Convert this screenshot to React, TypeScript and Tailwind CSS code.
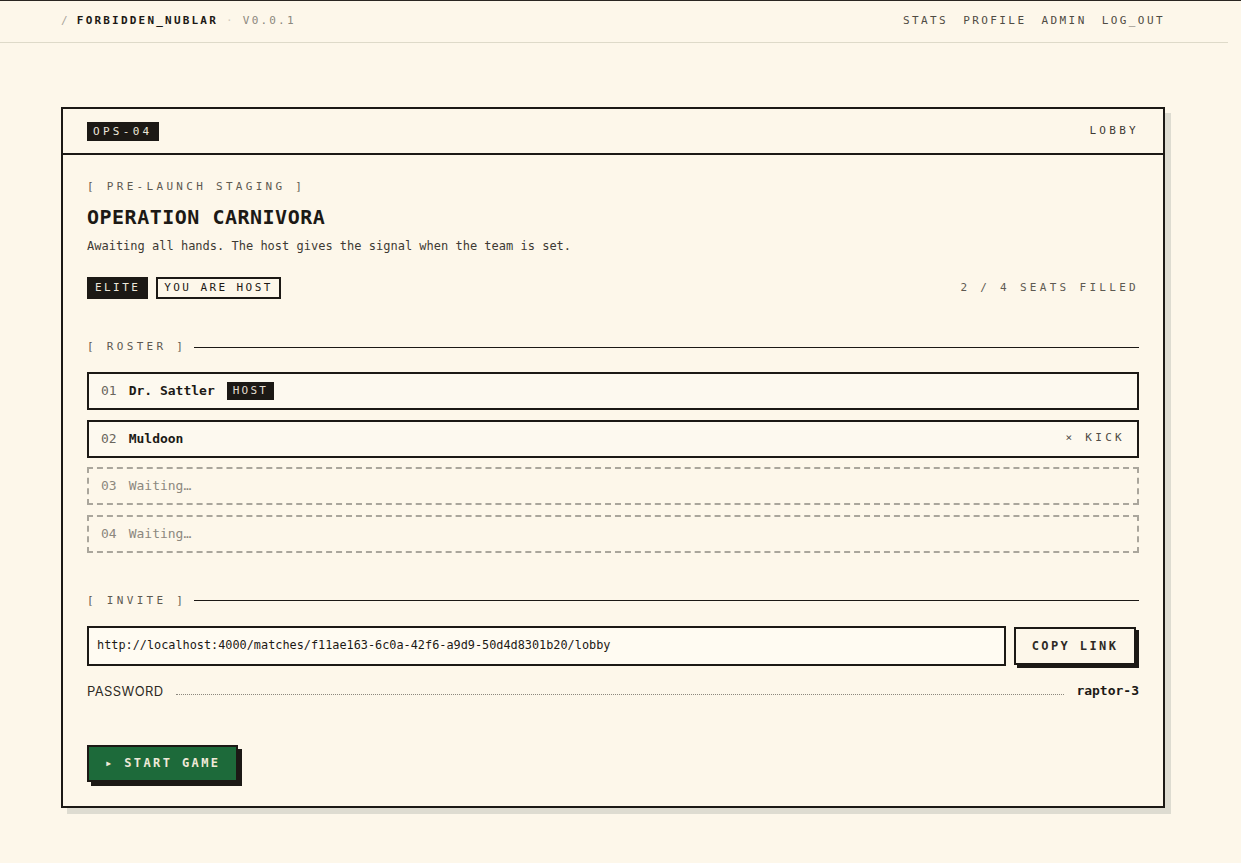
const mono = "font-['DejaVu_Sans_Mono',monospace]";

const SectionHead = ({ label }: { label: string }) => (
  <div className="flex items-center gap-2">
    <span className="text-[11px] leading-4 tracking-[0.3em] text-[#5e5a52]">
      [ {label} ]
    </span>
    <div className="h-px flex-1 bg-[#1c1915]" />
  </div>
);

type Seat = { no: string; name?: string; host?: boolean; kick?: boolean };

const seats: Seat[] = [
  { no: "01", name: "Dr. Sattler", host: true },
  { no: "02", name: "Muldoon", kick: true },
  { no: "03" },
  { no: "04" },
];

const SeatRow = ({ seat }: { seat: Seat }) => {
  if (!seat.name) {
    return (
      <div className="flex h-[38px] items-center gap-3 border-2 border-dashed border-[#aaa69c] px-3 text-[13px] text-[#8c887e]">
        <span>{seat.no}</span>
        <span>Waiting…</span>
      </div>
    );
  }
  return (
    <div className="flex h-[38px] items-center gap-3 border-2 border-[#1c1915] bg-[#fdf9ef] px-3 text-[13px]">
      <span className="text-[#6a665e]">{seat.no}</span>
      <span className="font-bold text-[#1c1915]">{seat.name}</span>
      {seat.host && (
        <span className="bg-[#1c1915] px-1.5 py-[2px] text-[11px] leading-[14px] tracking-[0.2em] text-[#e4dfd2]">
          HOST
        </span>
      )}
      {seat.kick && (
        <span className="ml-auto text-[11px] tracking-[0.3em] text-[#4f4b44]">
          × KICK
        </span>
      )}
    </div>
  );
};

const App = () => {
  return (
    <div className={`min-h-[863px] w-full bg-[#fdf7ea] ${mono} text-[#1c1915]`}>
      <div className="h-px w-full bg-[#2a2622]" />
      <header className="w-[1228px] border-b border-[#dedac9]">
        <div className="ml-[61px] flex h-[41px] w-[1104px] items-center justify-between">
          <div className="flex items-center text-[11px] tracking-[0.2em]">
            <span className="mr-[7px] text-[#aaa69c]">/</span>
            <span className="font-bold text-[#1c1915]">FORBIDDEN_NUBLAR</span>
            <span className="mx-2 text-[#d0ccc0]">·</span>
            <span className="text-[#8c887e]">V0.0.1</span>
          </div>
          <nav className="flex items-center gap-[15px] text-[11px] tracking-[0.22em] text-[#4f4b44]">
            <span>STATS</span>
            <span>PROFILE</span>
            <span>ADMIN</span>
            <span>LOG_OUT</span>
          </nav>
        </div>
      </header>

      <div className="w-[1228px] pt-[64px] pb-[48px]">
        <div className="ml-[61px] w-[1104px] border-2 border-[#1c1915] bg-[#fdf7ea] shadow-[6px_6px_0_#dedcd1]">
          <div className="flex h-[46px] items-center justify-between border-b-2 border-[#1c1915] px-6">
            <span className="bg-[#1c1915] px-1.5 py-[3px] text-[11px] leading-[13px] tracking-[0.3em] text-[#ece7da]">
              OPS-04
            </span>
            <span className="text-[11px] tracking-[0.3em] text-[#3d3a34]">LOBBY</span>
          </div>

          <div className="px-6 pt-6 pb-6">
            <div className="text-[11px] leading-4 tracking-[0.3em] text-[#5e5a52]">
              [ PRE-LAUNCH STAGING ]
            </div>
            <h1 className="mt-2 text-[20px] leading-7 font-bold tracking-[0.5px] text-[#1c1915]">
              OPERATION CARNIVORA
            </h1>
            <p className="mt-[7px] text-[12px] leading-4 text-[#3d3a34]">
              Awaiting all hands. The host gives the signal when the team is set.
            </p>

            <div className="mt-[23px] flex items-center justify-between">
              <div className="flex items-center gap-2">
                <span className="border-2 border-[#1c1915] bg-[#1c1915] px-1.5 py-[2px] text-[11px] leading-[14px] tracking-[0.22em] text-[#ece7da]">
                  ELITE
                </span>
                <span className="border-2 border-[#1c1915] px-1.5 py-[2px] text-[11px] leading-[14px] tracking-[0.22em] text-[#1c1915]">
                  YOU ARE HOST
                </span>
              </div>
              <span className="text-[11px] tracking-[0.3em] text-[#5e5a52]">
                2 / 4 SEATS FILLED
              </span>
            </div>

            <div className="mt-10">
              <SectionHead label="ROSTER" />
            </div>
            <div className="mt-[17px] flex flex-col gap-[9.6px]">
              {seats.map((s) => (
                <SeatRow key={s.no} seat={s} />
              ))}
            </div>

            <div className="mt-10">
              <SectionHead label="INVITE" />
            </div>
            <div className="mt-[17px] flex items-center gap-2">
              <div className="flex h-[40px] flex-1 items-center border-2 border-[#1c1915] bg-[#fffbf2] px-2 text-[11.85px] text-[#1c1915]">
                http://localhost:4000/matches/f11ae163-6c0a-42f6-a9d9-50d4d8301b20/lobby
              </div>
              <button className="mr-[3px] h-[38px] w-[122px] border-2 border-[#1c1915] bg-[#fdf7ea] text-[12px] font-bold tracking-[0.2em] text-[#2e2a25] shadow-[3px_3px_0_#1c1915]">
                COPY LINK
              </button>
            </div>

            <div className="mt-4 flex items-end gap-3">
              <span className="font-['Inter',sans-serif] text-[13px] leading-[18px] tracking-[0.03em] text-[#2e2a25]">
                PASSWORD
              </span>
              <div className="mb-[5px] flex-1 border-b border-dotted border-[#8c887e]" />
              <span className="text-[13px] leading-[18px] font-bold text-[#1c1915]">raptor-3</span>
            </div>

            <button className="mt-[45px] h-[37px] w-[151px] whitespace-nowrap border-2 border-[#1c1915] bg-[#1d6a3a] px-4 text-left text-[12px] font-bold tracking-[0.2em] text-[#efe9d8] shadow-[4px_4px_0_#1c1915]">
              ▸ START GAME
            </button>
          </div>
        </div>
      </div>
    </div>
  );
};

export default App;
